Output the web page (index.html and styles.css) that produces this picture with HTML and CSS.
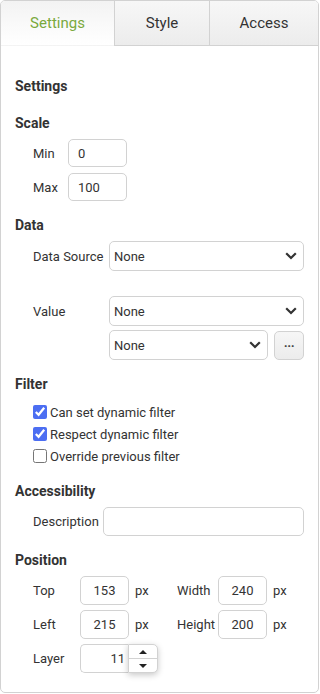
FILE: index.html
```html
<!DOCTYPE html>
<html lang="en">
<head>
    <meta charset="UTF-8">
    <meta name="viewport" content="width=device-width, initial-scale=1.0">
    <title>Properties</title>
    <link rel="stylesheet" href="styles.css">
</head>
<body>
    <div class="panel">
        <div class="tabs">
            <div class="tab active">Settings</div>
            <div class="tab">Style</div>
            <div class="tab">Access</div>
        </div>

        <div class="content">
            <h2 class="title">Settings</h2>

            <div class="section">
                <h3>Scale</h3>
                <div class="rows scale">
                    <label>Min</label>
                    <input type="text" class="field small" value="0">
                    <label>Max</label>
                    <input type="text" class="field small" value="100">
                </div>
            </div>

            <div class="section">
                <h3>Data</h3>
                <div class="rows data">
                    <label>Data Source</label>
                    <select class="field select"><option>None</option></select>
                    <label class="value-label">Value</label>
                    <select class="field select value-select"><option>None</option></select>
                    <span></span>
                    <div class="combo">
                        <select class="field select"><option>None</option></select>
                        <button class="more">&middot;&middot;&middot;</button>
                    </div>
                </div>
            </div>

            <div class="section">
                <h3>Filter</h3>
                <div class="checks">
                    <label class="check"><input type="checkbox" checked> Can set dynamic filter</label>
                    <label class="check"><input type="checkbox" checked> Respect dynamic filter</label>
                    <label class="check"><input type="checkbox"> Override previous filter</label>
                </div>
            </div>

            <div class="section">
                <h3>Accessibility</h3>
                <div class="rows access">
                    <label>Description</label>
                    <input type="text" class="field">
                </div>
            </div>

            <div class="section">
                <h3>Position</h3>
                <div class="rows position">
                    <label>Top</label>
                    <input type="text" class="field num" value="153">
                    <span class="unit">px</span>
                    <label>Width</label>
                    <input type="text" class="field num" value="240">
                    <span class="unit">px</span>

                    <label>Left</label>
                    <input type="text" class="field num" value="215">
                    <span class="unit">px</span>
                    <label>Height</label>
                    <input type="text" class="field num" value="200">
                    <span class="unit">px</span>

                    <label>Layer</label>
                    <div class="spin">
                        <input type="text" class="spin-input" value="11">
                        <div class="spin-buttons">
                            <span class="arrow up"></span>
                            <span class="arrow down"></span>
                        </div>
                    </div>
                </div>
            </div>
        </div>
    </div>
</body>
</html>
```

FILE: styles.css
```css
body {
    margin: 0;
    font-family: Roboto, 'Liberation Sans', sans-serif;
    font-size: 13px;
    color: #333;
    background: #fff;
}

.panel {
    width: 317px;
    border: 1px solid #d2d2d2;
    border-radius: 5px;
    overflow: hidden;
}

.tabs {
    display: flex;
    height: 45px;
}

.tab {
    display: flex;
    align-items: center;
    justify-content: center;
    font-size: 15px;
    color: #333;
    background: linear-gradient(#f7f7f7, #ececec);
    border-bottom: 1px solid #d2d2d2;
    border-left: 1px solid #d2d2d2;
}

.tab:nth-child(1) { width: 113px; }
.tab:nth-child(2) { width: 94px; }
.tab:nth-child(3) { flex: 1; }

.tab.active {
    color: #7aa93d;
    background: linear-gradient(#f3f3f3, #fff);
    border-left: none;
    border-bottom-color: transparent;
}

.content {
    padding: 30px 14px 19px 14px;
}

h2, h3 {
    margin: 0;
    font-size: 14px;
    font-weight: bold;
    line-height: 20px;
    color: #333;
}

.title {
    margin-bottom: 17px;
}

.section + .section {
    margin-top: 14px;
}

.section h3 {
    margin-bottom: 6px;
}

.rows {
    display: grid;
    align-items: center;
    row-gap: 6px;
    padding-left: 18px;
}

.field {
    box-sizing: border-box;
    height: 29px;
    border: 1px solid #d2d2d2;
    border-radius: 5px;
    font-family: inherit;
    font-size: 13px;
    color: #333;
    padding: 0 9px;
    background: #fff;
    outline: none;
}

.scale {
    grid-template-columns: 35px 59px;
    row-gap: 6px;
}

.small {
    width: 59px;
    height: 28px;
}

.data {
    grid-template-columns: 76px 1fr;
    row-gap: 4px;
}

.select {
    width: 100%;
    height: 30px;
    padding: 0 30px 0 4px;
    appearance: none;
    -webkit-appearance: none;
    background: #fff url("data:image/svg+xml,%3Csvg xmlns='http://www.w3.org/2000/svg' width='12' height='8' viewBox='0 0 12 8'%3E%3Cpath d='M1.2 1.2 6 6l4.8-4.8' fill='none' stroke='%23333' stroke-width='2.2'/%3E%3C/svg%3E") no-repeat right 6px center;
}

.value-label,
.value-select {
    margin-top: 21px;
}

.combo {
    display: flex;
    gap: 6px;
}

.combo .select {
    flex: 1;
}

.more {
    width: 30px;
    height: 29px;
    margin-top: 1px;
    border: 1px solid #d2d2d2;
    border-radius: 5px;
    background: linear-gradient(#f6f6f6, #ececec);
    color: #444;
    font-family: inherit;
    font-size: 13px;
    font-weight: bold;
    letter-spacing: -0.5px;
    line-height: 1;
    padding: 0;
}

.checks {
    display: flex;
    flex-direction: column;
    padding-left: 18px;
    padding-top: 1px;
}

.check {
    display: flex;
    align-items: center;
    height: 22px;
}

.check input {
    width: 14px;
    height: 14px;
    margin: 0 3px 0 0;
    accent-color: #4c6ef2;
}

.access {
    grid-template-columns: 70px 1fr;
}

.access .field {
    width: 100%;
}

.position {
    grid-template-columns: 47px 49px 48px 41px 49px auto;
    row-gap: 5px;
}

.num {
    width: 49px;
    text-align: center;
    padding: 0 4px;
}

.unit {
    padding-left: 6px;
}

.spin {
    grid-column: span 2;
    display: flex;
    height: 29px;
}

.spin-input {
    box-sizing: border-box;
    width: 48px;
    height: 29px;
    border: 1px solid #d2d2d2;
    border-right: none;
    border-radius: 5px 0 0 5px;
    font-family: inherit;
    font-size: 13px;
    color: #333;
    text-align: right;
    padding: 0 3px 0 0;
    outline: none;
}

.spin-buttons {
    box-sizing: border-box;
    width: 30px;
    height: 29px;
    display: flex;
    flex-direction: column;
    border: 1px solid #d2d2d2;
    border-radius: 0 5px 5px 0;
    background: #fff;
    box-shadow: 0 2px 6px rgba(0, 0, 0, 0.22);
}

.arrow {
    flex: 1;
    display: flex;
    align-items: center;
    justify-content: center;
}

.arrow.up {
    border-bottom: 1px solid #d2d2d2;
}

.arrow::before {
    content: '';
    border-left: 4px solid transparent;
    border-right: 4px solid transparent;
}

.arrow.up::before {
    border-bottom: 4px solid #222;
}

.arrow.down::before {
    border-top: 4px solid #222;
}
```
